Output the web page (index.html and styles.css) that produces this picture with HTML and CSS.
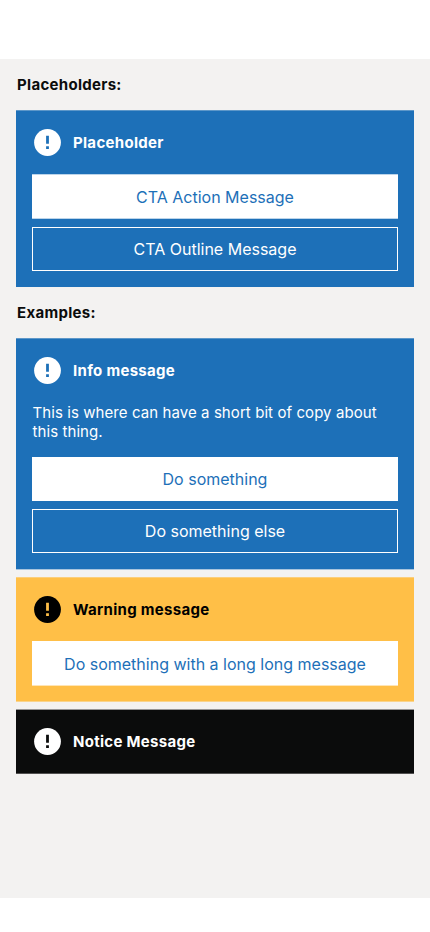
FILE: index.html
```html
<!DOCTYPE html>
<html lang="en">
<head>
<meta charset="utf-8">
<title>Messages</title>
<link rel="stylesheet" href="styles.css">
</head>
<body>
<main class="screen">
  <h2 class="heading">Placeholders:</h2>
  <section class="card info">
    <div class="title"><svg class="icon" viewBox="0 0 27 27"><circle class="disc" cx="13.5" cy="13.5" r="13.4"/><path class="mark" d="M12.1 6.8h2.8v8h-2.8zM12.1 17.3h2.8v2.8h-2.8z"/></svg><h3>Placeholder</h3></div>
    <div class="actions"><button class="cta tall">CTA Action Message</button><button class="cta outline">CTA Outline Message</button></div>
  </section>
  <h2 class="heading second">Examples:</h2>
  <section class="card info soft">
    <div class="title"><svg class="icon" viewBox="0 0 27 27"><circle class="disc" cx="13.5" cy="13.5" r="13.4"/><path class="mark" d="M12.1 6.8h2.8v8h-2.8zM12.1 17.3h2.8v2.8h-2.8z"/></svg><h3>Info message</h3></div>
    <p class="copy">This is where can have a short bit of copy about this thing.</p>
    <div class="actions"><button class="cta">Do something</button><button class="cta outline">Do something else</button></div>
  </section>
  <section class="card warning">
    <div class="title"><svg class="icon" viewBox="0 0 27 27"><circle class="disc" cx="13.5" cy="13.5" r="13.4"/><path class="mark" d="M12.1 6.8h2.8v8h-2.8zM12.1 17.3h2.8v2.8h-2.8z"/></svg><h3>Warning message</h3></div>
    <div class="actions"><button class="cta low">Do something with a long long message</button></div>
  </section>
  <section class="card notice">
    <div class="title"><svg class="icon" viewBox="0 0 27 27"><circle class="disc" cx="13.5" cy="13.5" r="13.4"/><path class="mark" d="M12.1 6.8h2.8v8h-2.8zM12.1 17.3h2.8v2.8h-2.8z"/></svg><h3>Notice Message</h3></div>
  </section>
</main>
</body>
</html>
```
FILE: styles.css
```css
* { box-sizing: border-box; }
body { margin: 0; background: #fff; font-family: Inter, "Liberation Sans", sans-serif; color: #0b0c0c; }
.screen { margin: 59px 0 34px; height: 839px; padding: 0 16px; background: #f3f2f1; }
h2, h3, p { margin: 0; }
.heading { height: 51px; padding-left: 1px; font-size: 15px; line-height: 52px; font-weight: 650; letter-spacing: 0.3px; }
.card { padding: 16px; margin-bottom: 8px; color: #fff; }
.heading.second { margin-top: -8px; }
.info { background: #1d70b8; --card: #1d70b8; --disc: #fff; box-shadow: inset 0 1px rgba(243, 242, 241, 0.3); }
.soft { box-shadow: inset 0 1px rgba(243, 242, 241, 0.3), 0 1px rgba(29, 112, 184, 0.35); }
.warning { background: #ffbf47; color: #000; --card: #ffbf47; --disc: #000; box-shadow: inset 0 1px rgba(243, 242, 241, 0.3), 0 1px rgba(255, 191, 71, 0.6); }
.notice { background: #0b0c0c; --card: #0b0c0c; --disc: #fff; box-shadow: inset 0 1px rgba(243, 242, 241, 0.6), 0 1px rgba(11, 12, 12, 0.7); }
.title { display: flex; align-items: center; height: 32px; padding-left: 2.3px; gap: 11.7px; }
.icon { width: 27px; height: 27px; }
.disc { fill: var(--disc); }
.mark { fill: var(--card); }
h3 { padding-top: 2px; font-size: 15px; line-height: 20px; font-weight: 650; letter-spacing: 0.3px; }
.copy { margin-top: 17px; padding-left: 0.5px; font-size: 15px; line-height: 19px; letter-spacing: 0.08px; }
.actions { display: flex; flex-direction: column; gap: 8px; margin-top: 16px; }
.cta { height: 44px; padding: 0; border: 0; background: #fff; color: #1d70b8; font: 400 16px/20px Inter, "Liberation Sans", sans-serif; }
.tall { height: 45px; box-shadow: inset 0 1px rgba(29, 112, 184, 0.3), inset 0 -1px rgba(29, 112, 184, 0.3); }
.low { padding-top: 1px; box-shadow: 0 1px rgba(255, 255, 255, 0.6); }
.outline { border: 1px solid #fff; background: transparent; color: #fff; }
```
